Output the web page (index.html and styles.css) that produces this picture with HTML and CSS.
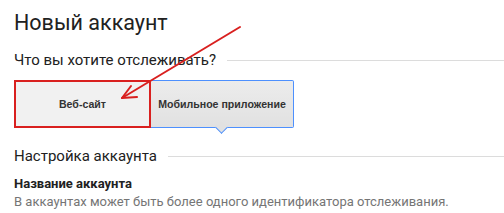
FILE: index.html
```
<!DOCTYPE html>
<html lang="ru">
<head>
    <meta charset="UTF-8">
    <title>Новый аккаунт</title>
    <link rel="stylesheet" href="styles.css">
</head>
<body>
    <div class="page">
        <h1 class="title">Новый аккаунт</h1>

        <div class="section">
            <h2>Что вы хотите отслеживать?</h2>
            <div class="rule"></div>
        </div>

        <div class="choices">
            <div class="choice choice-web">Веб-сайт</div>
            <div class="choice choice-app">Мобильное приложение</div>
        </div>

        <div class="section section-setup">
            <h2>Настройка аккаунта</h2>
            <div class="rule"></div>
        </div>

        <div class="field">
            <h3>Название аккаунта</h3>
            <p>В аккаунтах может быть более одного идентификатора отслеживания.</p>
        </div>

        <!-- red pointer drawn over the page -->
        <svg class="pointer" width="504" height="213" viewBox="0 0 504 213">
            <line x1="240" y1="27" x2="122" y2="98" stroke="#d9201f" stroke-width="2" stroke-linecap="round"/>
            <polyline points="131,86 122,98 137,97" fill="none" stroke="#d9201f" stroke-width="2" stroke-linecap="round" stroke-linejoin="round"/>
        </svg>
    </div>
</body>
</html>
```

FILE: styles.css
```
* {
    margin: 0;
    padding: 0;
    box-sizing: border-box;
}

body {
    font-family: Roboto, "Liberation Sans", sans-serif;
    background-color: white;
    color: #212121;
}

.page {
    position: relative;
    padding: 10px 0 0 14px;
    height: 213px;
    overflow: hidden;
}

.title {
    font-size: 21.5px;
    font-weight: 400;
    line-height: 26px;
}

.section {
    display: flex;
    align-items: center;
    margin-top: 14px;
}

.section h2 {
    font-size: 15px;
    font-weight: 400;
    line-height: 20px;
    color: #212121;
}

.rule {
    flex: 1;
    height: 1px;
    margin-left: 11px;
    background-color: #dcdcdc;
}

.choices {
    display: flex;
    margin-top: 10px;
}

.choice {
    height: 48px;
    display: flex;
    align-items: center;
    justify-content: center;
    font-family: "Liberation Sans", Arial, sans-serif;
    font-size: 10.6px;
    font-weight: bold;
    color: #333;
}

.choice-web {
    width: 137px;
    background-color: #f1f1f1;
    border: 2px solid #d9201f;
}

.choice-app {
    position: relative;
    width: 143px;
    background: linear-gradient(#ececec, #e1e1e1);
    border: 1px solid #4d90fe;
    border-left: none;
    border-radius: 0 2px 2px 0;
}

.choice-app::after {
    content: "";
    position: absolute;
    left: 66px;
    bottom: -5px;
    width: 8px;
    height: 8px;
    background-color: #e1e1e1;
    border-right: 1px solid #4d90fe;
    border-bottom: 1px solid #4d90fe;
    transform: rotate(45deg);
}

.section-setup {
    margin-top: 18px;
}

.field {
    margin-top: 9px;
}

.field h3 {
    font-size: 13px;
    font-weight: bold;
    line-height: 18px;
    color: #212121;
}

.field p {
    font-size: 13px;
    line-height: 18px;
    color: #757575;
}

.pointer {
    position: absolute;
    left: 0;
    top: 0;
    pointer-events: none;
}
```
